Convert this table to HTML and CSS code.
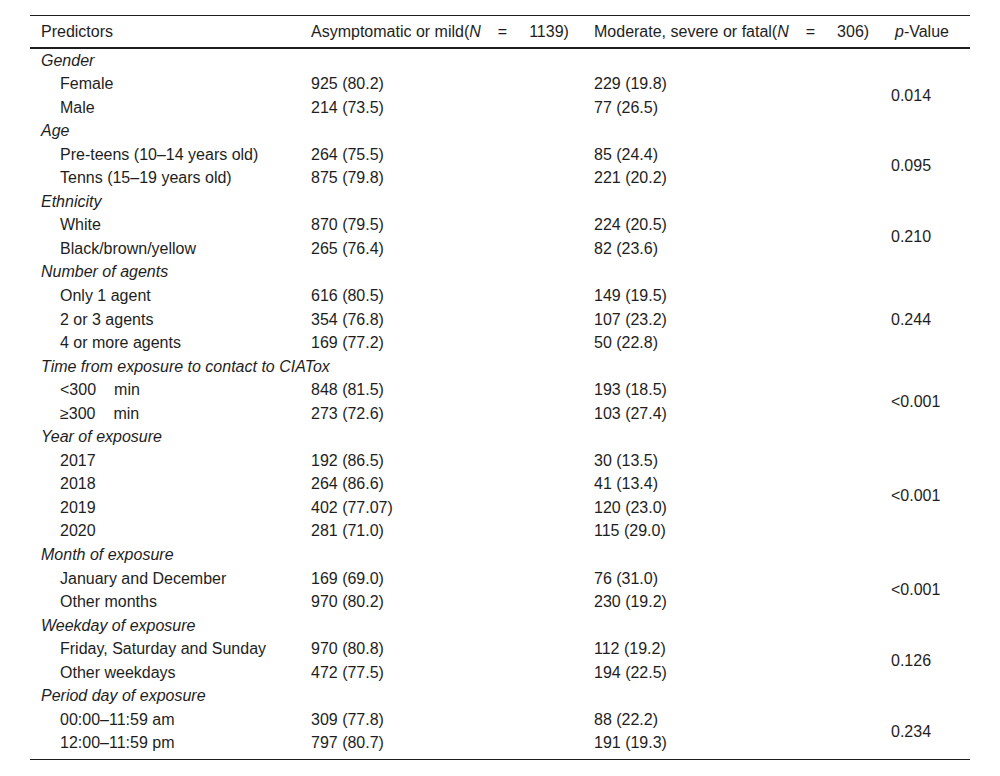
FILE: index.html
```html
<!DOCTYPE html>
<html lang="en">
<head>
<meta charset="utf-8">
<title>Predictors table</title>
<link rel="stylesheet" href="styles.css">
</head>
<body>
<table class="data">
  <colgroup>
    <col class="c1"><col class="c2"><col class="c3"><col class="c4">
  </colgroup>
  <thead>
    <tr>
      <th>Predictors</th>
      <th>Asymptomatic or mild(<i>N</i><span class="eq">=</span>1139)</th>
      <th>Moderate, severe or fatal(<i>N</i><span class="eq">=</span>306)</th>
      <th class="pv"><i>p</i>-Value</th>
    </tr>
  </thead>
  <tbody>
    <tr class="cat"><td colspan="4">Gender</td></tr>
    <tr><td class="sub">Female</td><td>925 (80.2)</td><td>229 (19.8)</td><td class="p" rowspan="2">0.014</td></tr>
    <tr><td class="sub">Male</td><td>214 (73.5)</td><td>77 (26.5)</td></tr>

    <tr class="cat"><td colspan="4">Age</td></tr>
    <tr><td class="sub">Pre-teens (10–14 years old)</td><td>264 (75.5)</td><td>85 (24.4)</td><td class="p" rowspan="2">0.095</td></tr>
    <tr><td class="sub">Tenns (15–19 years old)</td><td>875 (79.8)</td><td>221 (20.2)</td></tr>

    <tr class="cat"><td colspan="4">Ethnicity</td></tr>
    <tr><td class="sub">White</td><td>870 (79.5)</td><td>224 (20.5)</td><td class="p" rowspan="2">0.210</td></tr>
    <tr><td class="sub">Black/brown/yellow</td><td>265 (76.4)</td><td>82 (23.6)</td></tr>

    <tr class="cat"><td colspan="4">Number of agents</td></tr>
    <tr><td class="sub">Only 1 agent</td><td>616 (80.5)</td><td>149 (19.5)</td><td class="p" rowspan="3">0.244</td></tr>
    <tr><td class="sub">2 or 3 agents</td><td>354 (76.8)</td><td>107 (23.2)</td></tr>
    <tr><td class="sub">4 or more agents</td><td>169 (77.2)</td><td>50 (22.8)</td></tr>

    <tr class="cat"><td colspan="4">Time from exposure to contact to CIATox</td></tr>
    <tr><td class="sub">&lt;300<span class="unit">min</span></td><td>848 (81.5)</td><td>193 (18.5)</td><td class="p" rowspan="2">&lt;0.001</td></tr>
    <tr><td class="sub">≥300<span class="unit">min</span></td><td>273 (72.6)</td><td>103 (27.4)</td></tr>

    <tr class="cat"><td colspan="4">Year of exposure</td></tr>
    <tr><td class="sub">2017</td><td>192 (86.5)</td><td>30 (13.5)</td><td class="p" rowspan="4">&lt;0.001</td></tr>
    <tr><td class="sub">2018</td><td>264 (86.6)</td><td>41 (13.4)</td></tr>
    <tr><td class="sub">2019</td><td>402 (77.07)</td><td>120 (23.0)</td></tr>
    <tr><td class="sub">2020</td><td>281 (71.0)</td><td>115 (29.0)</td></tr>

    <tr class="cat"><td colspan="4">Month of exposure</td></tr>
    <tr><td class="sub">January and December</td><td>169 (69.0)</td><td>76 (31.0)</td><td class="p" rowspan="2">&lt;0.001</td></tr>
    <tr><td class="sub">Other months</td><td>970 (80.2)</td><td>230 (19.2)</td></tr>

    <tr class="cat"><td colspan="4">Weekday of exposure</td></tr>
    <tr><td class="sub">Friday, Saturday and Sunday</td><td>970 (80.8)</td><td>112 (19.2)</td><td class="p" rowspan="2">0.126</td></tr>
    <tr><td class="sub">Other weekdays</td><td>472 (77.5)</td><td>194 (22.5)</td></tr>

    <tr class="cat"><td colspan="4">Period day of exposure</td></tr>
    <tr><td class="sub">00:00–11:59 am</td><td>309 (77.8)</td><td>88 (22.2)</td><td class="p" rowspan="2">0.234</td></tr>
    <tr><td class="sub">12:00–11:59 pm</td><td>797 (80.7)</td><td>191 (19.3)</td></tr>
  </tbody>
</table>
</body>
</html>
```
FILE: styles.css
```css
html, body {
  margin: 0;
  background: #ffffff;
}

body {
  padding: 15px 30px 0;
  font-family: "Liberation Sans", Arial, sans-serif;
  font-size: 16px;
  color: #1e1e1e;
}

.data {
  width: 940px;
  table-layout: fixed;
  border-collapse: separate;
  border-spacing: 0;
  border-top: 1px solid #1e1e1e;
  border-bottom: 1px solid #1e1e1e;
  padding-bottom: 4px;
}

.c1 { width: 270px; }
.c2 { width: 283px; }
.c3 { width: 297px; }
.c4 { width: 90px; }

.data th {
  font-weight: normal;
  text-align: left;
  padding: 5.5px 11px 6px;
  line-height: 19px;
  border-bottom: 2px solid #1e1e1e;
  white-space: nowrap;
}

.data th.pv {
  padding-left: 15px;
}

.eq {
  padding: 0 22px 0 17px;
}

.data td {
  padding: 2px 11px;
  line-height: 19.55px;
  white-space: nowrap;
  vertical-align: middle;
}

.cat td {
  font-style: italic;
}

.data td.sub {
  padding-left: 30px;
}

.unit {
  padding-left: 18px;
}
```
